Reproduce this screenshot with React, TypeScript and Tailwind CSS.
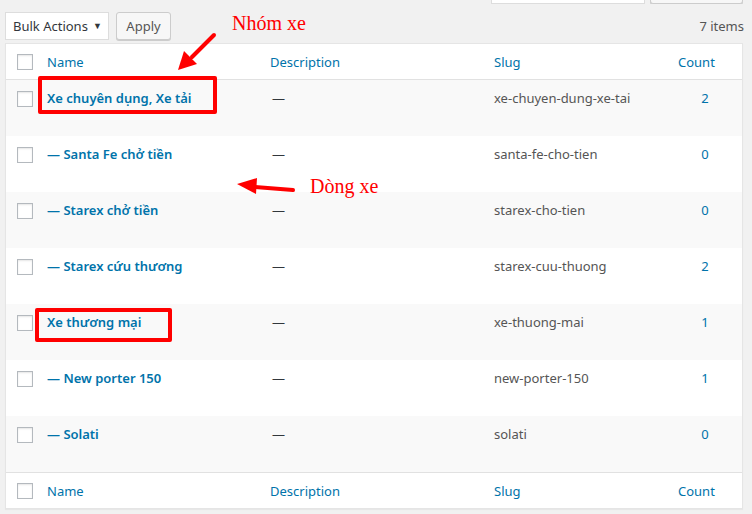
import React from "react";

const rows = [
  { name: "Xe chuyên dụng, Xe tải", slug: "xe-chuyen-dung-xe-tai", count: "2" },
  { name: "— Santa Fe chở tiền", slug: "santa-fe-cho-tien", count: "0" },
  { name: "— Starex chở tiền", slug: "starex-cho-tien", count: "0" },
  { name: "— Starex cứu thương", slug: "starex-cuu-thuong", count: "2" },
  { name: "Xe thương mại", slug: "xe-thuong-mai", count: "1" },
  { name: "— New porter 150", slug: "new-porter-150", count: "1" },
  { name: "— Solati", slug: "solati", count: "0" },
];

function Box() {
  return <span className="block w-[16px] h-[16px] border border-[#b4b9be] bg-white shadow-[inset_0_1px_2px_rgba(0,0,0,0.1)]" />;
}

function HeadRow({ top }: { top?: boolean }) {
  return (
    <div
      className={
        "grid grid-cols-[31px_223px_224px_184px_74px] h-[36px] items-center bg-white " +
        (top ? "border-b border-[#e1e1e1]" : "border-t border-[#e1e1e1]")
      }
    >
      <div className="pl-[11px]"><Box /></div>
      <div className="pl-[10px] text-[#0073aa]">Name</div>
      <div className="pl-[10px] text-[#0073aa]">Description</div>
      <div className="pl-[10px] text-[#0073aa]">Slug</div>
      <div className="pl-[10px] pr-[29px] text-center text-[#0073aa]">Count</div>
    </div>
  );
}

export default function App() {
  return (
    <div
      className="relative w-[752px] h-[514px] bg-[#f1f1f1] overflow-hidden text-[13px] leading-[20px] text-[#555]"
      style={{ fontFamily: '"Noto Sans", "Open Sans", sans-serif' }}
    >
      <div className="h-[4px] overflow-hidden flex justify-end items-end gap-[5px] pr-[9px]">
        <div className="flex-none w-[154px] h-[28px] bg-white border border-[#ddd]" />
        <div className="flex-none w-[93px] h-[28px] bg-[#f7f7f7] border border-[#ccc] rounded-[3px] shadow-[0_1px_0_#ccc]" />
      </div>
      <div className="flex items-center mt-[8px] pl-[5px] pr-[8px] h-[28px]">
        <div className="flex items-center justify-between w-[104px] h-[28px] bg-white border border-[#ddd] pl-[7px] pr-[6px] text-[#32373c]">
          <span>Bulk Actions</span>
          <span className="text-[9px]">▼</span>
        </div>
        <div className="ml-[7px] flex items-center justify-center w-[55px] h-[28px] bg-[#f7f7f7] border border-[#ccc] rounded-[3px] shadow-[0_1px_0_#ccc] text-[#555]">
          Apply
        </div>
        <div className="ml-auto text-[#555]">7 items</div>
      </div>

      <div className="mt-[3px] ml-[5px] w-[738px] border border-[#e5e5e5] shadow-[0_1px_1px_rgba(0,0,0,0.04)] bg-white">
        <HeadRow top />
        {rows.map((r, i) => (
          <div
            key={r.slug}
            className={
              "grid grid-cols-[31px_223px_224px_184px_74px] h-[56px] items-start pt-[8px] " +
              (i % 2 === 0 ? "bg-[#f9f9f9]" : "bg-white")
            }
          >
            <div className="pl-[11px] pt-[3px]"><Box /></div>
            <div className="pl-[10px] font-semibold text-[#0073aa]">{r.name}</div>
            <div className="pl-[12px] text-[#32373c]">—</div>
            <div className="pl-[10px]">{r.slug}</div>
            <div className="px-[10px] text-center text-[#0073aa]">{r.count}</div>
          </div>
        ))}
        <HeadRow />
      </div>

      {/* annotations */}
      <div className="absolute left-[38px] top-[76px] w-[179px] h-[38px] border-[4px] border-[#ff0000] rounded-[2px]" />
      <div className="absolute left-[35px] top-[308px] w-[137px] h-[34px] border-[4px] border-[#ff0000] rounded-[2px]" />
      <div
        className="absolute left-[232px] top-[9px] text-[20px] leading-[28px] text-[#ff0000]"
        style={{ fontFamily: '"Liberation Serif", serif' }}
      >
        Nhóm xe
      </div>
      <div
        className="absolute left-[310px] top-[172px] text-[20px] leading-[28px] text-[#ff0000]"
        style={{ fontFamily: '"Liberation Serif", serif' }}
      >
        Dòng xe
      </div>
      <svg className="absolute left-0 top-0" width="752" height="514" viewBox="0 0 752 514">
        <line x1="214" y1="35" x2="192" y2="57" stroke="#ff0000" strokeWidth="4" strokeLinecap="round" />
        <polygon points="178,70 184,51 197,64" fill="#ff0000" />
        <line x1="293" y1="190" x2="255" y2="187" stroke="#ff0000" strokeWidth="4" strokeLinecap="round" />
        <polygon points="237,184 257,178 256,194" fill="#ff0000" />
      </svg>
    </div>
  );
}
